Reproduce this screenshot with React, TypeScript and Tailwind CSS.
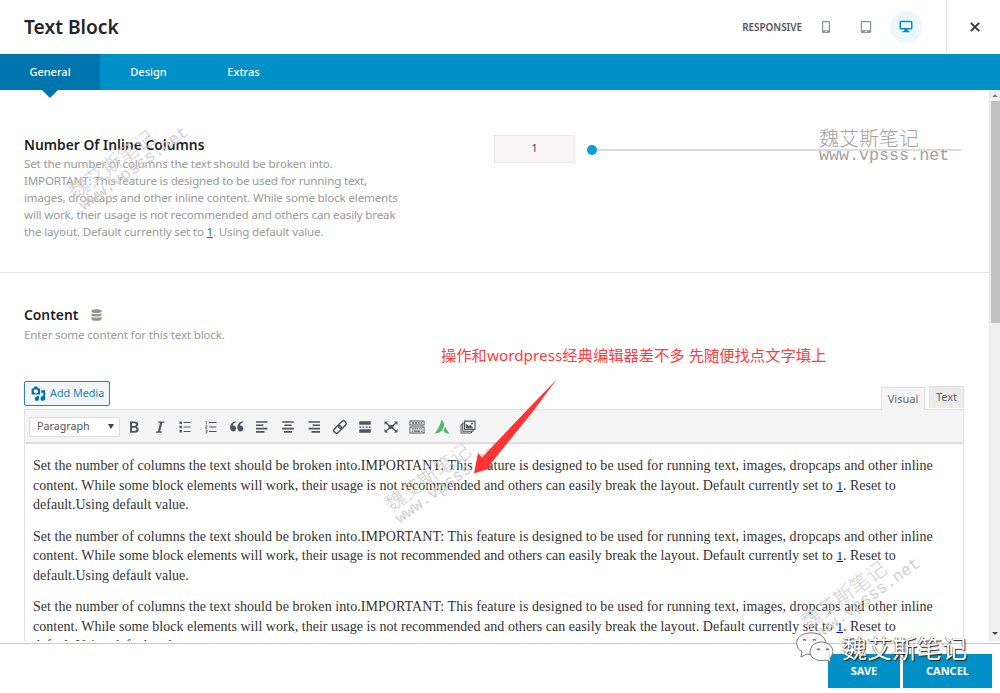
import React, { useState } from 'react'

type IconProps = { children: React.ReactNode; className?: string }

const Icon = ({ children, className = 'size-4' }: IconProps) => (
  <svg viewBox="0 0 16 16" fill="currentColor" className={`shrink-0 ${className}`}>
    {children}
  </svg>
)

const toolbarIcons = [
  {
    name: 'bold',
    icon: <path fillRule="evenodd" d="M4 2.500h4.200c2.600 0 4 1 4 2.900 0 1.300-.7 2.100-1.900 2.400 1.500.3 2.400 1.200 2.400 2.700 0 2.100-1.500 3.200-4.200 3.200H4zM6 4.200v2.800h2c1.400 0 2-.5 2-1.400S9.400 4.200 8 4.200zM6 8.700v3.300h2.300c1.500 0 2.200-.6 2.200-1.700s-.7-1.600-2.200-1.600z" />,
  },
  {
    name: 'italic',
    icon: <path d="M6.300 2.500h6.200l-.3 1.300h-2L8.200 12.400h1.800l-.3 1.300H3.700l.3-1.300h2L8 3.800H6z" />,
  },
  {
    name: 'bullets',
    icon: <path d="M2.500 2.500h2.400v2.400H2.500zM2.500 6.800h2.400v2.400H2.500zM2.500 11.100h2.400v2.400H2.500zM6.500 3h7v1h-7zM6.500 7.500h7v1h-7zM6.500 12h7v1h-7z" />,
  },
  {
    name: 'numbers',
    icon: (
      <>
        <path d="M6 3h7.500v1H6zM6 7.500h7.500v1H6zM6 12h7.500v1H6z" />
        <path fill="none" stroke="currentColor" strokeWidth=".7" d="M2.500 2.500h1v3M2.500 6.800h1.500v1.200H2.700v1.300h1.600M2.500 11h1.500v3H2.500M2.700 12.400H4" />
      </>
    ),
  },
  {
    name: 'quote',
    icon: <path d="M7.200 3.200C5 3.600 4 4.800 3.700 6.600c2-.3 3.400.9 3.400 2.800 0 1.800-1.200 3-2.900 3-2 0-3.100-1.500-3.100-3.900C1.100 5 3.300 2.500 7.200 2.200zM14.400 3.200c-2.200.4-3.200 1.600-3.500 3.400 2-.3 3.400.9 3.400 2.800 0 1.800-1.200 3-2.900 3-2 0-3.100-1.500-3.100-3.900 0-3.500 2.200-6 6.100-6.300z" />,
  },
  { name: 'left', icon: <path d="M2 2.200h11.500v1.600H2zM2 5.500h7.500v1.600H2zM2 8.800h11.500v1.600H2zM2 12.100h8.500v1.600H2z" /> },
  { name: 'center', icon: <path d="M2.200 2.200h11.600v1.600H2.200zM4.500 5.500h7v1.600h-7zM2.200 8.800h11.600v1.600H2.200zM4 12.100h8v1.600H4z" /> },
  { name: 'right', icon: <path d="M2.500 2.200H14v1.600H2.500zM6.500 5.500H14v1.600H6.500zM2.500 8.800H14v1.600H2.500zM5.500 12.100H14v1.600H5.500z" /> },
  {
    name: 'link',
    icon: (
      <g fill="none" stroke="currentColor" strokeWidth="1.5" transform="rotate(-45 8 8)">
        <rect x="0.500" y="5.400" width="8.500" height="5.200" rx="2.600" />
        <rect x="7" y="5.400" width="8.500" height="5.200" rx="2.600" />
      </g>
    ),
  },
  {
    name: 'more',
    icon: <path d="M2.300 2.300h11.400v3.500H2.300zM2.300 7.400h2v1.300h-2zM5.400 7.400h2v1.300h-2zM8.600 7.400h2v1.300h-2zM11.700 7.400h2v1.300h-2zM2.300 10.200h11.400v3.500H2.300z" />,
  },
  {
    name: 'expand',
    icon: (
      <>
        <path d="M1.500 2.500h3.600L1.500 6zM14.500 2.500h-3.600L14.500 6zM1.500 13.500h3.600L1.500 10zM14.500 13.500h-3.600l3.600-3.500z" />
        <path d="M5.500 6.200h5v3.600h-5z" />
        <path fill="none" stroke="currentColor" strokeWidth="1.200" d="M2.500 3.500l11 9M13.500 3.500l-11 9" />
      </>
    ),
  },
  {
    name: 'kitchen sink',
    icon: (
      <>
        <path fillRule="evenodd" d="M.5 1.500h15v5H.5zM1.400 2.400v3.200h13.200V2.400zM.5 7.500h15v7H.5zM1.400 8.400v5.200h13.200V8.400z" />
        <path d="M3 3.300h2v1.500H3zM6 3.300h2v1.500H6zM9 3.300h1.500v1.500H9zM11.500 3.300H13v1.500h-1.500zM3 9.200h1.500v1.300H3zM5.300 9.200h1.500v1.300H5.300zM7.600 9.200h1.500v1.300H7.600zM9.900 9.200h1.300v1.300H9.900zM12 9.200h1.300v1.300H12zM3 11.500h1.300v1.300H3zM5 11.500h6v1.300H5zM12 11.500h1.300v1.300H12z" />
      </>
    ),
  },
  {
    name: 'avada',
    icon: (
      <g fill="#55b96e">
        <path d="M.5 14.800C3 11.500 6 6.500 7.500.8c1.600 1.200 2.700 3.500 2.700 5.200C9.500 10.500 7.500 14 .5 14.800z" />
        <path d="M10.900 7.500L15.400 14.800c-3 0-5-1.200-6-3.300q1.200-1.800 1.500-4z" />
      </g>
    ),
  },
  {
    name: 'gallery',
    icon: (
      <>
        <g fill="none" stroke="currentColor">
          <path d="M4.500 2.200h10.500v8.300H4.500z" strokeWidth="1.200" />
          <path d="M2.700 4v8.300h10.500V11M2.700 4h1.800M1 5.700v8.300h10.500v-1.500M1 5.700h1.500" strokeWidth="1" />
        </g>
        <path d="M5.800 4.500l2.700 2.700 1.500-1.300L13.800 9.500h-8z" />
        <circle cx="12" cy="4.500" r="1" />
      </>
    ),
  },
]

const Heading = ({ children }: { children: React.ReactNode }) => (
  <h3 className="text-[13.850px] leading-5 font-semibold text-[#1d1f26]">{children}</h3>
)

const Watermark = ({ className }: { className: string }) => (
  <div
    className={`absolute pointer-events-none whitespace-nowrap font-['Liberation_Mono','Noto_Sans_CJK_SC',monospace] ${className}`}
  >
    <p className="text-[20px] leading-[17px] font-light">魏艾斯笔记</p>
    <p className="text-[16.700px] leading-[14px]">www.vpsss.net</p>
  </div>
)

const EditorParagraph = () => (
  <p className="mb-3 whitespace-nowrap">
    <span className="block tracking-[0.055px]">
      Set the number of columns the text should be broken into.IMPORTANT: This feature is designed to be used for running text, images, dropcaps and other inline
    </span>
    <span className="block tracking-[0.025px]">
      content. While some block elements will work, their usage is not recommended and others can easily break the layout. Default currently set to{' '}
      <a className="text-[13px] text-[#0000ee] underline">1</a>. Reset to
    </span>
    <span className="block tracking-[0.010px]">default.Using default value.</span>
  </p>
)

const App = () => {
  const [tab, setTab] = useState('General')
  return (
    <div className="relative w-[1000px] h-[693px] overflow-hidden flex flex-col bg-white font-['Noto_Sans','Noto_Sans_CJK_SC',sans-serif] text-[12px]">
      <header className="h-[54px] shrink-0 flex items-center pl-6">
        <h2 className="flex-1 text-[19.200px] font-semibold text-[#23252d]">Text Block</h2>
        <span className="mr-[16px] text-[9.900px] font-semibold text-[#50575e]">RESPONSIVE</span>
        <Icon className="size-4 text-[#8c9399]">
          <path fillRule="evenodd" d="M5 2h6q1 0 1 1v10q0 1-1 1H5q-1 0-1-1V3q0-1 1-1zM5.200 3.200v8h5.600v-8zM7.300 12v1h1.500v-1z" />
        </Icon>
        <Icon className="ml-6 size-4 text-[#8c9399]">
          <path fillRule="evenodd" d="M4 2h8q1.200 0 1.200 1v10q0 1-1.200 1H4q-1.200 0-1.200-1V3q0-1 1.200-1zM4 3.200v8h8v-8zM7.300 12v1h1.500v-1z" />
        </Icon>
        <div className="ml-4 size-8 rounded-full bg-[#edf7fe] flex items-center justify-center text-[#0090c8]">
          <Icon>
            <path fillRule="evenodd" d="M3 1.800h10q1.500 0 1.500 1.500v6q0 1.200-1.500 1.200H9.500l.5 1.500h1.500v1.200h-7V12H6l.5-1.500H3q-1.500 0-1.500-1.200v-6q0-1.500 1.500-1.500zM3 3.300v5.700h10V3.300z" />
          </Icon>
        </div>
        <button className="ml-6 w-[54px] h-full border-l border-[#dfe1e3] flex items-center justify-center text-[#333639]">
          <svg viewBox="0 0 10 10" className="size-[10px] ml-[2px] -mt-px" stroke="currentColor" strokeWidth="1.900">
            <path d="M.8.800l8.400 8.400M9.200.800L.8 9.200" />
          </svg>
        </button>
      </header>
      <nav className="h-9 shrink-0 flex bg-[#0090c8] text-white text-[11px] font-medium">
        {[
          { label: 'General', width: 'w-[100px]' },
          { label: 'Design', width: 'w-[97px]' },
          { label: 'Extras', width: 'w-[93px]' },
        ].map(({ label, width }) => (
          <button
            key={label}
            onClick={() => setTab(label)}
            className={`relative pt-px ${width} ${tab === label ? 'bg-[#0074ad]' : ''}`}
          >
            {label}
            {tab === label && (
              <span className="absolute left-1/2 top-full -translate-x-1/2 border-x-8 border-t-8 border-x-transparent border-t-[#0074ad]" />
            )}
          </button>
        ))}
      </nav>

      <main className="h-[553px] shrink-0 flex">
        <div className="flex-1 min-w-0 h-[551px] overflow-hidden">
          <section className="h-[183px] pt-[45px] px-6 flex border-b border-[#dfe1e3]">
            <div className="w-[470px]">
              <Heading>Number Of Inline Columns</Heading>
              <p className="pt-px leading-[16.900px] text-[#999] text-[11.600px] tracking-[-0.175px] whitespace-nowrap">
                Set the number of columns the text should be broken into.
                <br />
                IMPORTANT: This feature is designed to be used for running text,
                <br />
                images, dropcaps and other inline content. While some block elements
                <br />
                will work, their usage is not recommended and others can easily break
                <br />
                the layout. Default currently set to <a className="text-[#2f6f94] underline">1</a>. Using default value.
              </p>
            </div>
            <div className="flex items-center w-[467px] h-7">
              <div className="w-[81px] h-7 border border-[#e8e6e6] bg-[#f7f5f5] flex items-center justify-center text-[10.500px] text-[#444]">
                1
              </div>
              <div className="ml-[12px] mt-[2px] size-[10px] rounded-full bg-[#009fdb]" />
              <div className="flex-1 mt-px h-[2px] bg-[#dcdcdc]" />
            </div>
          </section>

          <section className="pt-8 px-6">
            <div className="flex items-center gap-[13px]">
              <Heading>Content</Heading>
              <svg viewBox="0 0 10 12" className="w-[11px] h-3" fill="#96968f">
                <path d="M0 1.800C0-.4 10-.4 10 1.800v1C10 4.600 0 4.600 0 2.800zM0 4.300c2 1.200 8 1.200 10 0v2c0 1.700-10 1.700-10 0zM0 7.800c2 1.200 8 1.200 10 0v2.400c0 2-10 2-10 0z" />
              </svg>
            </div>
            <p className="pt-px leading-[17px] text-[#999] text-[11.600px] tracking-[-0.175px]">
              Enter some content for this text block.
            </p>

            <div className="mt-[38px] flex items-end justify-between w-[940px]">
              <button className="mb-[3px] w-[86px] h-[25px] rounded-[2px] border border-[#2384b5] bg-[#f3f5f6] text-[#2384b5] text-[10.800px] flex items-center pl-[5px] gap-[3px] whitespace-nowrap">
                <Icon className="size-[17px] text-[#0071a1]">
                  <path fillRule="evenodd" d="M1.500 3.200h1.700l1-1.700h2.600l1 1.700h1.700V9h-8zM5.500 4a2 2 0 1 0 0 4 2 2 0 0 0 0-4z" />
                  <path d="M10.500 5h3.800v7.500a2.200 2.200 0 1 1-1.800-2V7.200h-2zM8.500 10v3a2 2 0 1 1-1.600-2V10z" />
                </Icon>
                Add Media
              </button>
              <div className="flex gap-1 text-[11px] text-[#666]">
                <button className="relative top-px w-11 h-[23px] border border-b-0 border-[#e1e1e1] bg-[#f5f5f5]">Visual</button>
                <button className="w-[35px] h-[22px] border border-b-0 border-[#e1e1e1] bg-[#ebebeb]">Text</button>
              </div>
            </div>
            <div className="w-[940px] h-[280px] border border-[#e1e1e1]">
              <div className="h-[34px] pt-px bg-[#f5f5f5] border-b-2 border-[#dedede] flex items-center pl-1 text-[#50555c]">
                <div className="w-[91px] h-5 border border-[#dcdcdc] bg-white flex items-center justify-between px-[7px] text-[10.700px] text-[#555] mr-[6px]">
                  Paragraph
                  <span className="border-x-[3.500px] border-t-[5px] border-x-transparent border-t-[#444] -mr-[2px]" />
                </div>
                <div className="flex gap-[9.700px]">
                  {toolbarIcons.map(({ name, icon }) => (
                    <button key={name} aria-label={name}>
                      <Icon className="size-4">{icon}</Icon>
                    </button>
                  ))}
                </div>
              </div>
              <div className="pt-3 pl-2 font-['Liberation_Serif',serif] text-[14px] leading-[19.500px] text-[#333]">
                <EditorParagraph />
                <EditorParagraph />
                <EditorParagraph />
              </div>
            </div>
          </section>
        </div>
        <div className="w-[11px] h-[551px] bg-[#f0f0f0] flex flex-col items-center border-l border-[#e6e6e6]">
          <span className="mt-1 border-x-[3px] border-b-[3px] border-x-transparent border-b-[#888]" />
          <div className="mt-1 w-[9px] h-[222px] bg-[#c1c1c1]" />
          <span className="mt-auto mb-[6px] border-x-[3px] border-t-[3px] border-x-transparent border-t-[#444]" />
        </div>
      </main>

      <footer className="flex-1 border-t border-[#c8c8c8] pt-[10px] pr-2 flex justify-end gap-[3px] text-white text-[11px] font-bold">
        <button className="w-[72px] h-[34px] bg-[#0090c8]">SAVE</button>
        <button className="w-[89px] h-[34px] bg-[#0090c8]">CANCEL</button>
      </footer>

      <p className="absolute left-[441px] top-[345px] text-[15.300px] leading-5 text-[#ff3b3b] whitespace-nowrap">
        操作和wordpress经典编辑器差不多 先随便找点文字填上
      </p>

      <Watermark className="left-[819px] top-[132px] text-[#a2a2a2]" />
      <Watermark className="left-[64px] top-[147px] -rotate-[36deg] text-[#d0d0d0]" />
      <Watermark className="left-[380px] top-[460px] -rotate-[36deg] text-[#d0d0d0]" />
      <Watermark className="left-[796px] top-[578px] -rotate-[36deg] text-[#d0d0d0]" />

      <svg viewBox="0 0 84 96" className="absolute left-[474px] top-[378px] w-[84px] h-24" fill="#ff3333">
        <path d="M83 1L55 30L8 79.500l-4-4.500L0 95.500l18.500-6L16 86.500 60 32z" />
      </svg>

      <div className="absolute left-[795px] top-[632px] flex items-center gap-[5px]">
        <svg viewBox="0 0 42 34" className="w-[42px] h-[34px]" fill="white" fillOpacity=".85" stroke="#777" strokeWidth="1">
          <path d="M7 20C-1 14 0 4 11 1.500S31 4 31 12c0 7-9 12-19 10l-6 3z" />
          <path d="M17 14c5-6 17-5 20 2 2 5 0 8-2 10l1 4-5-2c-7 2-15-1-16-7q0-4 2-7z" />
          <path strokeWidth="1.500" d="M8 8.500q1.500-2 3 0M18 8.500q1.500-2 3 0M22 18q1.500-2 3 0M31 18q1.500-2 3 0" />
        </svg>
        <p className="-mt-[3px] text-[25px] leading-8 text-white whitespace-nowrap [text-shadow:1px_1px_1px_#222,-0.500px_-0.500px_0.500px_#555]">
          魏艾斯笔记
        </p>
      </div>
    </div>
  )
}

export default App
